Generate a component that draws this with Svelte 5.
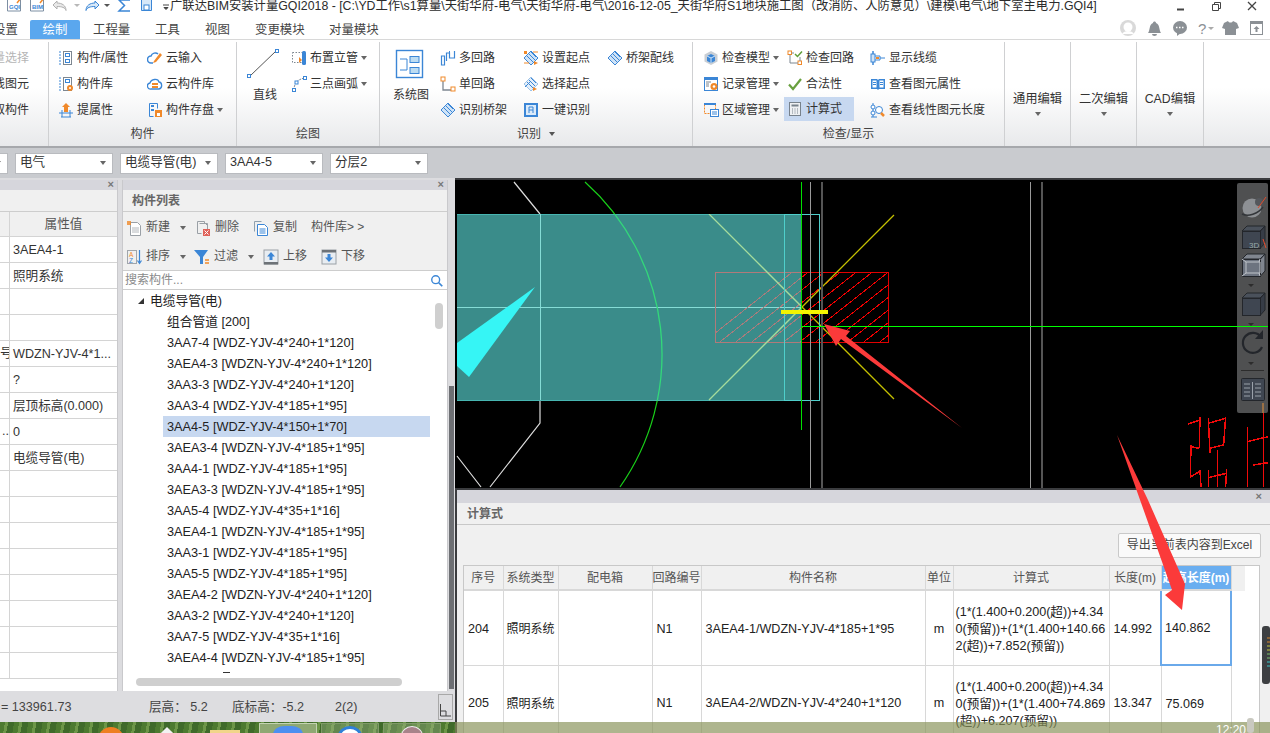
<script>
  const B = '#3b86d6', O = '#f0892a', G = '#7d8791';

  // 16x16 icons used in ribbon and toolbars
  const stackRows = `<path d="M1 2h2M1 5h2M1 8h2M1 11h2M1 14h2" stroke="${B}"/><rect x="5.5" y="1.5" width="8" height="13" stroke="${G}"/><rect x="7.5" y="3.5" width="4" height="3" stroke="${B}"/>`;
  const hatch = `<path d="M1 8l7-7 7 7-7 7z" stroke="${B}" fill="#cfe3f7"/><path d="M4 6l6 6M6 4l6 6M8 2l5 5" stroke="${B}"/>`;
  const icons = {
    attr: `${stackRows}<rect x="7.5" y="9.5" width="4" height="3" stroke="${B}"/>`,
    lib: `${stackRows}<circle cx="12" cy="12" r="3" fill="${O}"/><circle cx="12" cy="12" r="1" fill="#fff"/>`,
    pick: `<path d="M8 1l4 4h-2v5H6V5H4z" fill="${O}"/><path d="M1 11h14M3 15h10M4 8v7M12 8v7" stroke="${B}"/>`,
    cloudin: `<path d="M6 13H4a3 3 0 010-7c1-3 5-4 7-2" stroke="${B}" stroke-width="1.5"/><path d="M7 11l6-8 2 2-6 7-3 1z" fill="${O}"/>`,
    cloudlib: `<path d="M4 13a3 3 0 01-1-6c1-4 8-5 9-1 3 0 4 6 0 7z" stroke="${B}" stroke-width="1.3" fill="#fff"/><rect x="5" y="7" width="6" height="2" fill="${O}"/><rect x="5" y="10" width="6" height="2" fill="${O}"/>`,
    saveas: `<path d="M2.5 1.5h8v5M2.5 1.5v13h4" stroke="${B}"/><rect x="4" y="3" width="3" height="2" fill="${B}"/><rect x="4" y="7" width="3" height="2" fill="${B}"/><rect x="8" y="8" width="7" height="7" fill="${O}"/><rect x="10" y="11" width="3" height="3" fill="#fff"/>`,
    riser: `<rect x="1.5" y="2.5" width="10" height="10" stroke="${G}" stroke-dasharray="1.5 1.5"/><rect x="11" y="1" width="4" height="14" rx="1.5" fill="${B}"/><path d="M8 7l3 3-3 3z" fill="${O}"/>`,
    arc: `<path d="M3 14C3 7 7 3 14 2" stroke="${G}" stroke-dasharray="2 1"/><rect x="1.5" y="12.5" width="3" height="3" stroke="${B}" fill="#fff"/><rect x="12.5" y=".5" width="3" height="3" stroke="${B}" fill="#fff"/><rect x="4" y="5" width="3" height="3" stroke="${B}" fill="#fff"/>`,
    multi: `<path d="M1.5 15V6h3v9zM6.5 11V3h3v5h5V1" stroke="${B}" stroke-width="1.2"/><path d="M9.5 1v2" stroke="${B}"/>`,
    single: `<path d="M3 3v11h9" stroke="${G}" stroke-width="1.3"/><rect x="1" y="1" width="4" height="4" stroke="${O}" fill="#fff"/><rect x="11" y="11" width="4" height="4" stroke="${O}" fill="#fff"/>`,
    tray: hatch,
    setstart: `${hatch}<rect x="1" y="1" width="3" height="3" fill="${O}"/><path d="M11 11l4 2-4 2z" fill="${O}"/><path d="M1 13h5M10 2h5" stroke="${O}"/>`,
    selstart: `<path d="M1 8l7-7 7 7-7 7z" stroke="#9cc2e8" fill="#e4effa"/><path d="M4 6l6 6M6 4l6 6M8 2l5 5M2 11l6-6" stroke="${B}"/><path d="M10 11l4 2-4 2z" fill="${O}"/>`,
    oneclick: `<rect x="1" y="1" width="14" height="14" fill="${B}"/><rect x="3" y="3" width="10" height="10" fill="#dcebfa"/><path d="M6 11V5h4v6M6 8h4" stroke="${B}"/>`,
    cube: `<path d="M8 1l6.5 3.5v7L8 15l-6.5-3.5v-7z" fill="#c9ced4"/><path d="M8 4l4 2v5l-4 2-4-2V6z" fill="${B}"/><path d="M8 8v5M4 6l4 2 4-2" stroke="#cfe3f7"/>`,
    record: `<rect x="1.5" y="1.5" width="13" height="13" stroke="${B}" fill="#fff"/><rect x="1" y="1" width="14" height="3" fill="${B}"/><path d="M3 6h5M3 8h3M3 10h3" stroke="${G}"/><circle cx="11" cy="10.5" r="3.5" fill="${O}"/><circle cx="11" cy="10.5" r="1.3" fill="#fff"/>`,
    region: `<rect x="1.5" y="1.5" width="11" height="10" stroke="${O}" stroke-dasharray="2 1"/><rect x="1" y="1" width="12" height="2" fill="${B}"/><rect x="7.5" y="7.5" width="8" height="7" stroke="${B}" fill="#fff"/><path d="M9 10h5M9 12h5" stroke="${B}"/>`,
    circuit: `<rect x="1" y="1" width="3.5" height="3.5" stroke="${O}" fill="#fff"/><rect x="11" y="11" width="3.5" height="3.5" stroke="${O}" fill="#fff"/><path d="M4.5 3H7M3 5v8h8M13 7v4" stroke="${G}"/><path d="M8 4l2.5 2.5L15 1.5" stroke="#5f9e3a" stroke-width="1.5"/>`,
    check: `<path d="M2 8.5l4 4.5 8-10" stroke="#69a03f" stroke-width="2.2"/>`,
    calc: `<rect x="2.5" y="1.5" width="11" height="13" fill="#eef0f3" stroke="#78828c"/><rect x="4.5" y="3.5" width="7" height="2" fill="#78828c"/><path d="M5 8h1M7.5 8h1M10 8h1M5 10h1M7.5 10h1M10 10h1M5 12h1M7.5 12h1M10 12h1" stroke="#78828c"/>`,
    cable: `<path d="M3 1v14" stroke="${B}" stroke-width="1.5"/><rect x="1" y="4" width="4" height="8" fill="#cfe3f7" stroke="${B}"/><path d="M5 6h5v4H5M10 8h5" stroke="${B}"/><rect x="6" y="7" width="3" height="2" fill="${O}"/>`,
    book: `<path d="M1 3h6l1 1 1-1h6v10H9l-1 1-1-1H1z" fill="${B}"/><path d="M2.5 4.5h4v7h-4zM9.5 4.5h4v7h-4z" fill="#fff"/><path d="M3 6.5h3M3 8.5h3M10 6.5h3M10 8.5h3" stroke="${B}"/>`,
    measure: `<path d="M3 1v14M1 15h6" stroke="${B}"/><circle cx="3" cy="5" r="2" fill="#fff" stroke="${B}"/><circle cx="3" cy="11" r="2" fill="#fff" stroke="${B}"/><circle cx="9" cy="8" r="3.5" fill="#fff" stroke="${B}"/><path d="M11 11l3 3" stroke="${O}" stroke-width="2.5"/>`,
    newdoc: `<path d="M4.5 2.5h7l3 3v10h-10z" fill="#fff" stroke="#9aa0a6"/><path d="M6 8h7M6 10h7M6 12h7" stroke="#b4b8bc"/><rect x="1" y="1" width="4" height="4" fill="${O}" opacity=".8"/>`,
    del: `<path d="M2.5 1.5h7v2h3v4M2.5 1.5v12h4" stroke="#9aa0a6"/><path d="M4.5 3.5h6l2 2v4" stroke="#9aa0a6"/><rect x="8" y="9" width="7" height="7" fill="#e0625a"/><path d="M9.5 10.5l4 4m0-4l-4 4" stroke="#fff"/>`,
    copy: `<path d="M1.5 11.5v-10h7" stroke="#8fa0ae"/><path d="M4.5 4.5h7l3 3v8h-10z" fill="#fff" stroke="${B}"/><path d="M6.5 9h6M6.5 11h6M6.5 13h6" stroke="${B}"/>`,
    sort: `<rect x="1.5" y="1.5" width="9" height="13" stroke="#a0a6ac"/><text x="3" y="7.5" font-size="6.5" font-family="Liberation Sans" fill="${O}">A</text><text x="3" y="13.5" font-size="6.5" font-family="Liberation Sans" fill="${B}">Z</text><path d="M13.5 1v13M11.5 11.5l2 3 2-3" stroke="${B}" stroke-width="1.2"/>`,
    filter: `<path d="M0 1h14L9 8v7H6V8z" fill="${B}"/><path d="M11 11h4M11 14h4" stroke="${O}" stroke-width="1.5"/>`,
    up: `<rect x="1" y="1" width="14" height="14" fill="#e8edf2" stroke="#9aa0a6"/><rect x="1" y="13" width="14" height="2.5" fill="#6d7277"/><path d="M8 3l4 4.5H9.5V11h-3V7.5H4z" fill="${B}"/>`,
    down: `<rect x="1" y="1" width="14" height="14" fill="#e8edf2" stroke="#9aa0a6"/><rect x="1" y="1" width="14" height="2.5" fill="#6d7277"/><path d="M8 13l4-4.5H9.5V5h-3v3.5H4z" fill="${B}"/>`,
    search: `<circle cx="6.5" cy="6.5" r="4.5" stroke="${B}" stroke-width="1.6"/><path d="M10 10l4 4" stroke="${B}" stroke-width="2"/>`
  };

  const ribbon = [
    { label: '', w: 49, clip: true, cols: [{ items: [{ t: '批量选择', off: true }, { t: '选线图元' }, { t: '拾取构件' }] }] },
    { label: '构件', w: 188, pad: 9, cols: [
      { w: 89, items: [{ i: 'attr', t: '构件/属性' }, { i: 'lib', t: '构件库' }, { i: 'pick', t: '提属性' }] },
      { items: [{ i: 'cloudin', t: '云输入' }, { i: 'cloudlib', t: '云构件库' }, { i: 'saveas', t: '构件存盘', c: true }] }
    ] },
    { label: '绘图', w: 143, pad: 8, big: { name: '直线', w: 46, kind: 'line' }, cols: [
      { items: [{ i: 'riser', t: '布置立管', c: true }, { i: 'arc', t: '三点画弧', c: true }] }
    ] },
    { label: '识别', labelCaret: true, w: 313, pad: 11, big: { name: '系统图', w: 49, kind: 'sys' }, cols: [
      { w: 83, items: [{ i: 'multi', t: '多回路' }, { i: 'single', t: '单回路' }, { i: 'tray', t: '识别桥架' }] },
      { w: 84, items: [{ i: 'setstart', t: '设置起点' }, { i: 'selstart', t: '选择起点' }, { i: 'oneclick', t: '一键识别' }] },
      { items: [{ i: 'tray', t: '桥架配线' }] }
    ] },
    { label: '检查/显示', w: 312, pad: 10, cols: [
      { w: 84, items: [{ i: 'cube', t: '检查模型', c: true }, { i: 'record', t: '记录管理', c: true }, { i: 'region', t: '区域管理', c: true }] },
      { w: 83, items: [{ i: 'circuit', t: '检查回路' }, { i: 'check', t: '合法性' }, { i: 'calc', t: '计算式', on: true }] },
      { items: [{ i: 'cable', t: '显示线缆' }, { i: 'book', t: '查看图元属性' }, { i: 'measure', t: '查看线性图元长度' }] }
    ] }
  ];
  const tabs = [
    { t: '设置', w: 37 },
    { t: '绘制', w: 50, on: true },
    { t: '工程量', w: 62 },
    { t: '工具', w: 50 },
    { t: '视图', w: 50 },
    { t: '变更模块', w: 74 },
    { t: '对量模块', w: 74 }
  ];
  const props = ['3AEA4-1', '照明系统', '', '', 'WDZN-YJV-4*1...', '?', '层顶标高(0.000)', '0', '电缆导管(电)', '', '', '', '', '', '', '', ''];
  const propKeys = { 4: '号', 7: '..' };
  const tools = [
    [{ i: 'newdoc', t: '新建', w: 69, c: true }, { i: 'del', t: '删除', w: 58 }, { i: 'copy', t: '复制', w: 58 }, { t: '构件库> >', w: 70 }],
    [{ i: 'sort', t: '排序', w: 68, c: true }, { i: 'filter', t: '过滤', w: 69, c: true }, { i: 'up', t: '上移', w: 58 }, { i: 'down', t: '下移', w: 60 }]
  ];
  const tree = ['组合管道 [200]', '3AA7-4 [WDZ-YJV-4*240+1*120]', '3AEA4-3 [WDZN-YJV-4*240+1*120]', '3AA3-3 [WDZ-YJV-4*240+1*120]', '3AA3-4 [WDZ-YJV-4*185+1*95]', '3AA4-5 [WDZ-YJV-4*150+1*70]', '3AEA3-4 [WDZN-YJV-4*185+1*95]', '3AA4-1 [WDZ-YJV-4*185+1*95]', '3AEA3-3 [WDZN-YJV-4*185+1*95]', '3AA5-4 [WDZ-YJV-4*35+1*16]', '3AEA4-1 [WDZN-YJV-4*185+1*95]', '3AA3-1 [WDZ-YJV-4*185+1*95]', '3AA5-5 [WDZ-YJV-4*185+1*95]', '3AEA4-2 [WDZN-YJV-4*240+1*120]', '3AA3-2 [WDZ-YJV-4*240+1*120]', '3AA7-5 [WDZ-YJV-4*35+1*16]', '3AEA4-4 [WDZN-YJV-4*185+1*95]'];
  const heads = ['序号', '系统类型', '配电箱', '回路编号', '构件名称', '单位', '计算式', '长度(m)', '超高长度(m)', ''];
  const widths = [39, 55, 94, 49, 224, 28, 156, 52, 70, 14];
  const rows = [
    { no: 204, name: '3AEA4-1/WDZN-YJV-4*185+1*95', f: ['(1*(1.400+0.200(超))+4.34', '0(预留))+(1*(1.400+140.66', '2(超))+7.852(预留))'], len: '14.992', high: '140.862', sel: true },
    { no: 205, name: '3AEA4-2/WDZN-YJV-4*240+1*120', f: ['(1*(1.400+0.200(超))+4.34', '0(预留))+(1*(1.400+74.869', '(超))+6.207(预留))'], len: '13.347', high: '75.069' }
  ];
  const hatchLines = Array.from({ length: 16 }, (_, n) => 700 + n * 16);
  const cubes = [43, 71, 110];
</script>

<div class="app">
  <header class="titlebar">
    <svg class="qa" width="170" height="20" viewBox="0 0 170 20" fill="none">
      <path d="M7.5 -1h13v12h-13zM30.5 -1h13v12h-13z" fill="#fff" stroke="#7d8fa3"/>
      <path d="M17 3l4-5M40 3l4-5" stroke={O} stroke-width="1.5"/>
      <text x="9" y="9" font-size="6" font-family="Liberation Sans" font-weight="700" fill={B}>GQI</text>
      <text x="32" y="9" font-size="6" font-family="Liberation Sans" font-weight="700" fill={B}>BIM</text>
      <path d="M57 1l-4 4 4 4V6.5c5 0 8 1 9 4 0-5-4-7.5-9-7.5z" fill="#e8e8e8" stroke="#b0b0b0"/>
      <path d="M74 4h6l-3 3z" fill="#b8b8b8"/>
      <path d="M95 1l4 4-4 4V6.5c-5 0-8 1-9 4 0-5 4-7.5 9-7.5z" fill="#d7e8f8" stroke={B}/>
      <path d="M104 4h6l-3 3z" fill="#555"/>
      <path d="M130 0h-11l5.5 5.5L119 11h11" stroke={B} stroke-width="1.5"/>
      <path d="M141.5 -1h10v11.5h-10z" fill="#d7e8f8" stroke={B}/>
      <rect x="144" y="5" width="5" height="5" fill="#fff" stroke={B}/>
      <path d="M163 5h6M164 7.5h4l-2 2z" fill="#444" stroke="#444"/>
    </svg>
    <span class="apptitle">广联达BIM安装计量GQI2018 - [C:\YD工作\s1算量\天街华府-电气\天街华府-电气\2016-12-05_天街华府S1地块施工图（改消防、人防意见）\建模\电气\地下室主电力.GQI4]</span>
    <svg class="winbtns" width="90" height="14" viewBox="0 0 90 14" fill="none" stroke="#444">
      <path d="M0 9.5h7" stroke-width="2"/>
      <path d="M35.5 4.5h6v6h-6zM37.5 4.5v-2h6v6h-2"/>
      <path d="M71 2l8 8m0-8l-8 8" stroke-width="1.3"/>
    </svg>
  </header>

  <nav class="tabbar">
    {#each tabs as tab}
      <span class="tab" class:on={tab.on} style="width:{tab.w}px">{tab.t}</span>
    {/each}
    <svg class="usericons" width="150" height="20" viewBox="0 0 150 20">
      <g transform="translate(2 -2)"><circle cx="9" cy="10" r="8" fill="#d9d9d9"/><circle cx="9" cy="9" r="4.5" fill="#fff"/><path d="M3 16c2-4 10-4 12 0z" fill="#fff"/></g>
      <path transform="translate(-5 -2)" d="M36 15c2-2 1-9 5-10 0-2 3-2 3 0 4 1 3 8 5 10zM40 16h5a2.5 2 0 01-5 0z" fill="#8b9095"/>
      <g transform="translate(-4 -2)"><ellipse cx="67" cy="9.5" rx="7" ry="6.5" fill="#8b9095"/><path d="M64 14v4l4-3z" fill="#8b9095"/><path d="M63 9.5h1.5M66 9.5h1.5M69 9.5h1.5" stroke="#fff" stroke-width="1.5"/></g>
      <g transform="translate(-6 -2)"><text x="87" y="16" font-size="15" font-family="Liberation Sans" fill="#8b9095">?</text><path d="M97 9h6l-3 3z" fill="#aaa"/></g>
      <path transform="translate(-6 -2)" d="M113 5l4-2c1 2 4 2 5 0l4 2 2 5-3 1v6h-11v-6l-3-1z" fill="#8b9095"/>
      <g transform="translate(-5 -2)"><rect x="138.5" y="3.5" width="12" height="13" fill="none" stroke="#8b9095"/><path d="M138 3h13v3h-13z" fill="#8b9095"/><path d="M144.5 8l3 3h-2v3h-2v-3h-2z" fill="#8b9095"/></g>
    </svg>
  </nav>

  <section class="ribbon">
    {#each ribbon as g}
      <div class="group" style="width:{g.w}px">
        <div class="gbody" class:gclip={g.clip} style="padding-left:{g.pad ?? 0}px">
          {#if g.big}
            <div class="bigbtn" style="width:{g.big.w}px">
              {#if g.big.kind === 'line'}
                <svg width="40" height="32" viewBox="0 0 40 32" fill="none">
                  <path d="M5 28L31 3" stroke="#555"/>
                  <rect x="2.5" y="26.5" width="3" height="3" fill="#fff" stroke={B}/>
                  <rect x="30.5" y="1.5" width="3" height="3" fill="#fff" stroke={B}/>
                </svg>
              {:else}
                <svg width="40" height="32" viewBox="0 0 40 32" fill="none">
                  <rect x="5.5" y="2.5" width="26" height="27" fill="#fff" stroke={B} stroke-width="1.4"/>
                  <path d="M9 11h7M9 22h7M16 11v11" stroke={B}/>
                  <rect x="19" y="8.5" width="9" height="6" fill="#bcdcf2" stroke={B}/>
                  <rect x="19" y="19.5" width="9" height="6" fill="#bcdcf2" stroke={B}/>
                </svg>
              {/if}
              <span>{g.big.name}</span>
            </div>
          {/if}
          {#each g.cols as col}
            <div class="col" style={col.w ? `width:${col.w}px` : ''}>
              {#each col.items as it}
                <div class="ritem" class:on={it.on} class:off={it.off}>
                  {#if it.i}
                    <svg class="ico" width="16" height="16" viewBox="0 0 16 16" fill="none">{@html icons[it.i]}</svg>
                  {/if}
                  <span>{it.t}</span>
                  {#if it.c}<i class="caret"></i>{/if}
                </div>
              {/each}
            </div>
          {/each}
        </div>
        <div class="glabel">{g.label}{#if g.labelCaret}<i class="caret lc"></i>{/if}</div>
      </div>
    {/each}
    {#each ['通用编辑', '二次编辑', 'CAD编辑'] as name}
      <div class="group drop"><span>{name}</span><i class="caret"></i></div>
    {/each}
  </section>

  <div class="combobar">
    {#each ['', '电气', '电缆导管(电)', '3AA4-5', '分层2'] as c, n}
      <div class="combo" class:first={n === 0}><span>{c}</span><i class="caret"></i></div>
    {/each}
  </div>

  <main class="body">
    <div class="leftcol">
      <div class="panels">
        <div class="panel props">
          <div class="strip"><b>×</b></div>
          <div class="phead"></div>
          <div class="proprow head"><span class="k"></span><span class="v c">属性值</span></div>
          {#each props as p, n}
            <div class="proprow"><span class="k">{propKeys[n] ?? ''}</span><span class="v">{p}</span></div>
          {/each}
        </div>
        <div class="panel list">
          <div class="strip"><b>×</b></div>
          <div class="phead title">构件列表</div>
          <div class="tools">
            {#each tools as row}
              <div class="toolrow">
                {#each row as tl}
                  <div class="tool" style="width:{tl.w}px">
                    {#if tl.i}
                      <svg class="ico" width="16" height="16" viewBox="0 0 16 16" fill="none">{@html icons[tl.i]}</svg>
                    {/if}
                    <span>{tl.t}</span>
                    {#if tl.c}<i class="caret"></i>{/if}
                  </div>
                {/each}
              </div>
            {/each}
          </div>
          <div class="search">
            <span>搜索构件...</span>
            <svg width="14" height="14" viewBox="0 0 16 16" fill="none">{@html icons.search}</svg>
          </div>
          <div class="tree">
            <div class="node root"><i class="tri"></i>电缆导管(电)</div>
            {#each tree as t, n}
              <div class="node" class:sel={n === 5}>{t}</div>
            {/each}
            <i class="cutmark"></i>
            <i class="vthumb"></i>
            <i class="hthumb"></i>
          </div>
        </div>
        <div class="splitter"><i></i></div>
      </div>
      <footer class="status">
        <span class="s1">= 133961.73</span>
        <span class="s2">层高： 5.2</span>
        <span class="s3">底标高：-5.2</span>
        <span class="s4">2(2)</span>
        <span class="cornerbtn">
          <svg width="12" height="16" viewBox="0 0 12 16" fill="none" stroke="#444"><path d="M1.5 1v12H12M1.5 8H7v5"/></svg>
        </span>
      </footer>
      <div class="task">
        <i class="t-orange"></i><i class="t-white"></i><i class="t-folder"></i>
        <span class="tbtn active"><i class="dot blue"></i></span>
        <span class="tbtn"><i class="dot ie"></i></span>
        <span class="tbtn"><i class="dot face"></i></span>
      </div>
    </div>

    <div class="rightcol">
      <div class="canvas">
        <svg width="815" height="308" viewBox="455 180 815 308" fill="none" shape-rendering="crispEdges">
          <rect x="455" y="180" width="815" height="308" fill="#000"/>
          <path d="M514 182L540 214M540 400V423L490 487M457 456L481 487" stroke="#ddd" stroke-width="1.2" shape-rendering="auto"/>
          <path d="M585 182A231 231 0 0 1 620 487" stroke="#19d019" stroke-width="1.2" shape-rendering="auto"/>
          <rect x="457" y="214" width="345" height="187" fill="#3a8c8a"/>
          <path d="M457 214.5H802M457 400.5H802" stroke="#47b5b1"/>
          <path d="M540.5 214V400M457 307.5H802" stroke="#86dcd6"/>
          <polygon points="535,287 457,343 457,366 469,377" fill="#36f5f5" shape-rendering="auto"/>
          <defs>
            <clipPath id="hatchbox"><rect x="715" y="272" width="174" height="71"/></clipPath>
            <clipPath id="teal"><rect x="457" y="214" width="345" height="187"/></clipPath>
            <clipPath id="dark"><rect x="802" y="180" width="468" height="308"/></clipPath>
          </defs>
          <g clip-path="url(#dark)">
            <rect x="715.5" y="272.5" width="173" height="70" stroke="#e00000"/>
            <g clip-path="url(#hatchbox)">
              {#each hatchLines as x}<path d="M{x} 345L{x + 95} 270" stroke="#f00000"/>{/each}
            </g>
            <path d="M709 214L894 399M709 400L894 215" stroke="#c4c000" stroke-width="1.3" shape-rendering="auto"/>
          </g>
          <g clip-path="url(#teal)">
            <path d="M585 182A231 231 0 0 1 620 487" stroke="#33d87a" stroke-width="1.3" shape-rendering="auto"/>
            <rect x="715.5" y="272.5" width="173" height="70" stroke="#b07a7a"/>
            <g clip-path="url(#hatchbox)">
              {#each hatchLines as x}<path d="M{x} 345L{x + 95} 270" stroke="#a87c7c"/>{/each}
            </g>
            <path d="M709 214L894 399M709 400L894 215" stroke="#a5dc9c" stroke-width="1.3" shape-rendering="auto"/>
          </g>
          <path d="M784.5 214.5H819.5V400.5H784.5Z" stroke="#4fcfcb"/>
          <path d="M801.5 182V430" stroke="#00e000"/>
          <path d="M810.5 182V488" stroke="#9a9a9a"/>
          <path d="M822 182V488M1042 182V488" stroke="#555" stroke-width="2"/>
          <path d="M1030.5 182V488" stroke="#9a9a9a"/>
          <rect x="781" y="310" width="47" height="4" fill="#f4f400"/>
          <g transform="translate(955 180) scale(.3333)" stroke="#f00a0a" stroke-width="4.5">
            <path d="M700 732L735 720M735 712L733 805M708 795L706 895M708 800L733 805"/>
            <path d="M760 715L765 820M760 730L812 715M812 712L806 795M765 805L806 795"/>
            <path d="M788 810V920M760 870V920M815 868L812 920M760 893L815 880"/>
            <path d="M735 870L738 920M708 890L738 872"/>
            <path d="M877 742V920M877 785L940 770M925 670V920M895 855L940 848"/>
          </g>
        </svg>
        <aside class="viewtools">
          <svg width="31" height="230" viewBox="0 0 31 230" fill="none">
            <circle cx="15" cy="25" r="9.5" fill="#8d9094"/><circle cx="22" cy="19" r="4" fill="#54575c"/>
            <path d="M5 31c6 3 16 0 21-7" stroke="#33363a" stroke-width="1.5"/>
            {#each cubes as y, n}
              <path d="M5 {y + 5}L10 {y}H28L23 {y + 5}Z" fill={n === 1 ? '#80868f' : '#4a515b'} stroke="#23262b"/>
              <rect x="5.5" y={y + 5.5} width="18" height="17" fill={n === 1 ? '#6d7480' : '#3f4651'} stroke="#23262b"/>
              <path d="M23.5 {y + 5}L28 {y}V{y + 17}L23.5 {y + 22}Z" fill={n === 1 ? '#80868f' : '#363c46'} stroke="#23262b"/>
            {/each}
            <path d="M9 79h14v11H9zM5 76l4 3M23 76l-1 3M5 93l4-3M23 93l-1-3" stroke="#c0c4ca"/>
            <text x="12" y="65" font-size="8" font-family="Liberation Sans" fill="#9aa">3D</text>
            <path d="M11 101h6l-3 3zM11 140h6l-3 3zM11 179h6l-3 3z" fill="#2c2c2c"/>
            <path d="M24 154a10 10 0 1 0 1 10" stroke="#23262b" stroke-width="2.2"/><path d="M26 147v9h-8z" fill="#23262b"/>
            <path d="M4 187.5h23" stroke="#2c2c2c"/>
            <rect x="4.5" y="195.5" width="23" height="22" rx="1" fill="#3f4651" stroke="#23262b"/>
            <path d="M7 201h6M7 205h6M7 209h6M7 213h6M18 201h6M18 205h6M18 209h6M18 213h6M15.5 199v17" stroke="#9aa1aa"/>
          </svg>
        </aside>
      </div>

      <div class="calc">
        <div class="strip"><b>×</b></div>
        <div class="calctitle">计算式</div>
        <div class="calcbar"><button class="export">导出当前表内容到Excel</button></div>
        <div class="tablewrap">
          <table>
            <colgroup>{#each widths as w}<col style="width:{w}px" />{/each}</colgroup>
            <thead>
              <tr>
                {#each heads as h, n}
                  <th class:hot={n === 8} class:blank={n === 9}>{h}</th>
                {/each}
              </tr>
            </thead>
            <tbody>
              {#each rows as r}
                <tr>
                  <td>{r.no}</td><td class="cjk">照明系统</td><td></td><td>N1</td>
                  <td>{r.name}</td><td class="mid">m</td>
                  <td class="formula">{#each r.f as line}<div>{line}</div>{/each}</td>
                  <td>{r.len}</td>
                  <td class:picked={r.sel}>{r.high}</td>
                  <td class="blank"></td>
                </tr>
              {/each}
            </tbody>
          </table>
        </div>
      </div>
      <div class="trayglass"><span>12:20</span></div>
    </div>

    <svg class="marks" width="1270" height="733" viewBox="0 0 1270 733" fill="none">
      <rect x="802" y="326" width="466" height="1" fill="#00ff00"/>
      <polygon points="824,324 850,331 846,336 962,428 841,339 836,346" fill="#fb3a3a"/>
      <polygon points="1117,435 1148,500 1185,584 1182,610 1165,595 1172,590" fill="#fb3a3a"/>
      <path d="M1258 208l8-11M1266 248l-3-9" stroke="#e04a2a"/>
      <path d="M1263 403v10" stroke="#e8913a"/>
      <rect x="1262" y="626" width="8" height="58" rx="3" fill="#3d3f42"/>
      <path d="M1267 638h3M1267 642h3" stroke="#d8862a"/>
      <path d="M1267 646h3M1267 650h3" stroke="#c8c83a"/>
      <path d="M1267 654h3M1267 658h3" stroke="#7ac06a"/>
      <path d="M1267 662h3M1267 666h3" stroke="#38c8c8"/>
      <rect x="1247" y="718" width="7" height="15" rx="3" fill="#c9c9c0"/>
    </svg>
  </main>
</div>

<style>
  :global(body) {
    margin: 0;
  }

  .app {
    position: relative;
    width: 1270px;
    height: 733px;
    overflow: hidden;
    display: flex;
    flex-direction: column;
    background: #fff;
    color: #333;
    font: 12px/1.2 "Liberation Sans", "Noto Sans CJK SC", sans-serif;
  }

  i {
    display: block;
  }

  .caret {
    width: 0;
    height: 0;
    border: 3px solid transparent;
    border-top: 4px solid #666;
    border-bottom: 0;
  }

  /* title + tabs */
  .titlebar {
    height: 20px;
    display: flex;
    align-items: flex-start;
    flex: none;
  }

  .qa {
    flex: none;
  }

  .apptitle {
    font-size: 12.34px;
    line-height: 13px;
    white-space: nowrap;
    width: 927px;
    flex: none;
    color: #2c2c2c;
  }

  .winbtns {
    margin-left: 80px;
    flex: none;
  }

  .tabbar {
    height: 20px;
    box-sizing: border-box;
    display: flex;
    flex: none;
    align-items: stretch;
    border-bottom: 1px solid #d8d8d8;
    font-size: 12.4px;
    position: relative;
  }

  .tab {
    flex: none;
    box-sizing: border-box;
    padding-left: 13px;
    line-height: 21px;
    white-space: nowrap;
    color: #444;
  }

  .tab:first-child {
    margin-left: -7px;
    padding-left: 0;
  }

  .tab.on {
    background: #5aa7ee;
    color: #fff;
    border-radius: 2px 2px 0 0;
    padding-left: 0;
    text-align: center;
  }

  .usericons {
    position: absolute;
    right: 3px;
    top: 0;
  }

  /* ribbon */
  .ribbon {
    height: 108px;
    display: flex;
    flex: none;
    box-sizing: border-box;
    background: linear-gradient(#fff 45%, #e8e9eb);
    border-bottom: 2px solid #a6a8ac;
  }

  .group {
    flex: none;
    height: 104px;
    box-sizing: border-box;
    margin-top: 2px;
    border-right: 1px solid #cfd0d2;
    display: flex;
    flex-direction: column;
  }

  .gbody {
    height: 78px;
    margin-top: 3px;
    display: flex;
    box-sizing: border-box;
  }

  .gclip {
    justify-content: flex-end;
    overflow: hidden;
    padding-right: 19px;
  }

  .gclip .col {
    align-items: flex-end;
    display: flex;
    flex-direction: column;
  }

  .glabel {
    height: 22px;
    display: flex;
    align-items: center;
    justify-content: center;
    gap: 8px;
    color: #444;
  }

  .lc {
    border-top-color: #555;
  }

  .col {
    flex: none;
  }

  .ritem {
    height: 26px;
    display: flex;
    align-items: center;
    white-space: nowrap;
  }

  .ritem .ico {
    margin-right: 3px;
    flex: none;
  }

  .ritem .caret {
    margin-left: 3px;
  }

  .ritem.off {
    color: #b5b5b5;
  }

  .ritem.on {
    background: #c7d8f0;
    height: 24px;
    width: 70px;
    margin: 0 0 0 -3px;
    padding-left: 3px;
    box-sizing: border-box;
  }

  .bigbtn {
    flex: none;
    display: flex;
    flex-direction: column;
    align-items: flex-start;
    padding-top: 3px;
    box-sizing: border-box;
  }

  .bigbtn span {
    width: 40px;
    text-align: center;
    margin-top: 8px;
  }

  .drop {
    width: 66px;
    align-items: center;
    justify-content: flex-start;
    padding-top: 50px;
    gap: 5px;
    font-size: 12.3px;
  }

  .drop:last-child {
    width: 67px;
  }

  /* combos */
  .combobar {
    height: 30px;
    flex: none;
    background: #c9cbcf;
    display: flex;
    gap: 7px;
    align-items: center;
    box-sizing: border-box;
  }

  .combo {
    width: 98px;
    height: 21px;
    flex: none;
    box-sizing: border-box;
    background: #fff;
    border: 1px solid #b9bbbf;
    display: flex;
    align-items: center;
    justify-content: space-between;
    padding: 0 6px 0 4px;
    font-size: 12.6px;
    white-space: nowrap;
  }

  .combo.first {
    margin-left: -90px;
  }

  /* main body */
  .body {
    flex: 1;
    display: flex;
    min-height: 0;
    position: relative;
  }

  .leftcol {
    width: 455px;
    flex: none;
    display: flex;
    flex-direction: column;
    background: #dcdcdf;
  }

  .panels {
    height: 513px;
    display: flex;
    padding-top: 2px;
    flex: none;
    box-sizing: border-box;
    position: relative;
    align-items: stretch;
  }

  .panel {
    background: #fff;
    display: flex;
    flex-direction: column;
    overflow: hidden;
    box-sizing: border-box;
    border-right: 1px solid #c9c9cc;
    height: 511px;
  }

  .strip {
    height: 10px;
    flex: none;
    background: #d6d6dc;
    text-align: right;
    color: #777;
  }

  .strip b {
    display: block;
    font: 700 11px/9px "Liberation Sans", sans-serif;
    margin-right: 3px;
  }

  .phead {
    height: 22px;
    flex: none;
    background: #f0f0f0;
    border-bottom: 1px solid #cdcdcd;
    box-sizing: border-box;
  }

  .phead.title {
    color: #666;
    font-weight: 700;
    padding: 4px 0 0 9px;
  }

  .props {
    width: 118px;
    flex: none;
  }

  .proprow {
    height: 26px;
    flex: none;
    display: flex;
    box-sizing: border-box;
    border-bottom: 1px solid #d4d4d4;
    align-items: center;
    font-size: 12.6px;
    white-space: nowrap;
  }

  .proprow.head {
    height: 25px;
    background: #f0f0f0;
  }

  .k {
    width: 10px;
    flex: none;
    height: 100%;
    line-height: 25px;
    border-right: 1px solid #d4d4d4;
    text-align: right;
    overflow: hidden;
    box-sizing: border-box;
  }

  .v {
    padding: 2px 0 0 3px;
  }

  .v.c {
    flex: 1;
    text-align: center;
    padding: 2px 0 0;
    color: #555;
  }

  .list {
    width: 326px;
    flex: none;
    margin-left: 4px;
    border-left: 1px solid #c9c9cc;
  }

  .tools {
    flex: none;
    height: 59px;
    background: #f0f0f0;
    border-bottom: 1px solid #cdcdcd;
    box-sizing: border-box;
  }

  .toolrow {
    height: 29px;
    box-sizing: border-box;
    display: flex;
    padding: 2px 0 0 3px;
    align-items: center;
  }

  .tool {
    flex: none;
    display: flex;
    align-items: center;
    gap: 4px;
    color: #555;
    white-space: nowrap;
  }

  .tool .caret {
    margin-left: 6px;
  }

  .search {
    height: 19px;
    flex: none;
    display: flex;
    justify-content: space-between;
    align-items: center;
    padding: 1px 3px 0 2px;
    color: #8a8a8a;
    border-bottom: 1px solid #cdcdcd;
    box-sizing: border-box;
    background: #fff;
  }

  .tree {
    position: relative;
    flex: 1;
    overflow: hidden;
  }

  .node {
    height: 21px;
    line-height: 21px;
    margin-left: 40px;
    width: 267px;
    box-sizing: border-box;
    padding-left: 4px;
    font-size: 12.72px;
    white-space: nowrap;
    color: #222;
  }

  .node.sel {
    background: #c7d8f0;
  }

  .node.root {
    margin-left: 20px;
    padding-left: 3px;
    display: flex;
    align-items: center;
  }

  .tri {
    width: 0;
    height: 0;
    border-left: 6px solid transparent;
    border-bottom: 6px solid #333;
    margin: 0 6px 0 -8px;
  }

  .vthumb {
    position: absolute;
    left: 312px;
    top: 13px;
    width: 8px;
    height: 26px;
    border-radius: 4px;
    background: #cfcfcf;
  }

  .hthumb {
    position: absolute;
    left: 13px;
    top: 388px;
    width: 266px;
    height: 8px;
    border-radius: 4px;
    background: #cfcfcf;
  }

  .cutmark {
    position: absolute;
    left: 100px;
    top: 382px;
    width: 7px;
    height: 1px;
    background: #333;
  }

  .splitter {
    width: 6px;
    flex: none;
    position: relative;
  }

  .splitter i {
    position: absolute;
    top: 206px;
    bottom: 2px;
    left: 1px;
    right: 0;
    background: #6d6f73;
  }

  .status {
    height: 31px;
    flex: none;
    box-sizing: border-box;
    background: #dddde0;
    display: flex;
    align-items: center;
    padding-top: 2px;
    font-size: 12.6px;
    color: #444;
    white-space: nowrap;
    position: relative;
  }

  .s1 {
    margin-left: 1px;
    width: 148px;
  }

  .s2 {
    width: 83px;
  }

  .s3 {
    width: 103px;
  }

  .s4 {
    width: 103px;
  }

  .cornerbtn {
    width: 15px;
    height: 26px;
    margin-top: -1px;
    box-sizing: border-box;
    border: 1px solid #a8a8a8;
    display: flex;
    align-items: flex-end;
    overflow: hidden;
  }

  .task {
    flex: 1;
    min-height: 0;
    display: flex;
    overflow: hidden;
    background: repeating-linear-gradient(100deg, #4d7a30 0 5px, #6d9648 5px 8px, #3f6a2a 8px 14px);
    padding-top: 1px;
  }

  .t-orange {
    width: 26px;
    height: 26px;
    border-radius: 50%;
    background: #ee7f22;
    margin: 4px 0 0 98px;
    flex: none;
  }

  .t-white {
    width: 10px;
    height: 10px;
    background: #f2f2f2;
    transform: rotate(45deg);
    margin: 6px 0 0 38px;
    flex: none;
  }

  .t-folder {
    width: 30px;
    height: 12px;
    background: #f1d58a;
    margin: 7px 0 0 38px;
    flex: none;
  }

  .tbtn {
    width: 58px;
    height: 20px;
    flex: none;
    margin-left: 4px;
    box-sizing: border-box;
    border: 1px solid #7f9a68;
    background: rgba(170, 190, 150, 0.35);
    display: flex;
    justify-content: center;
  }

  .tbtn.active {
    margin-left: 19px;
    background: #8fa873;
    border-color: #c3d2b2;
  }

  .dot {
    width: 30px;
    height: 20px;
    border-radius: 50%;
    margin-top: 2px;
  }

  .dot.blue {
    background: #4d8ff0;
    border-radius: 40% 40% 0 0;
  }

  .dot.ie {
    background: #fff;
    border: 3px solid #2f80d8;
    box-sizing: border-box;
    width: 24px;
  }

  .dot.face {
    background: #a8838a;
    border: 1px solid #eee;
    box-sizing: border-box;
    width: 22px;
  }

  /* canvas and calc panel */
  .rightcol {
    flex: 1;
    position: relative;
    display: flex;
    flex-direction: column;
    background: #3b3c3f;
    min-width: 0;
  }

  .canvas {
    flex: none;
    height: 312px;
    padding-top: 2px;
    box-sizing: border-box;
    position: relative;
  }

  .canvas > svg {
    display: block;
  }

  .viewtools {
    position: absolute;
    left: 782px;
    top: 5px;
    width: 31px;
    height: 230px;
    background: #4f5051;
    border-radius: 2px;
  }

  .viewtools svg {
    display: block;
  }

  .calc {
    flex: 1;
    min-height: 0;
    margin-left: 2px;
    background: #f0f0f0;
    display: flex;
    flex-direction: column;
    overflow: hidden;
  }

  .calc .strip {
    height: 13px;
  }

  .calc .strip b {
    line-height: 13px;
    margin-right: 8px;
  }

  .calctitle {
    height: 22px;
    flex: none;
    box-sizing: border-box;
    border-bottom: 1px solid #c8c8c8;
    padding: 4px 0 0 10px;
    color: #666;
    font-weight: 700;
  }

  .calcbar {
    height: 40px;
    flex: none;
    display: flex;
    justify-content: flex-end;
    align-items: flex-start;
    padding: 8px 9px 0 0;
    box-sizing: border-box;
  }

  .export {
    width: 143px;
    height: 25px;
    padding: 0;
    background: #fafafa;
    border: 1px solid #c9c9c9;
    border-radius: 2px;
    font: inherit;
    color: #444;
    white-space: nowrap;
  }

  .tablewrap {
    flex: 1;
    margin: 0 10px 0 6px;
    background: #fff;
    border: 1px solid #c8c8c8;
    border-bottom: 0;
  }

  table {
    border-collapse: collapse;
    table-layout: fixed;
    width: 781px;
  }

  th {
    height: 24px;
    padding: 2px 0 0;
    background: #f0f0f0;
    font-weight: 400;
    color: #555;
    border-right: 1px solid #d8d8d8;
    border-bottom: 2px solid #d8d8d8;
    white-space: nowrap;
    overflow: hidden;
    box-sizing: border-box;
  }

  th.hot {
    background: #6aaef0;
    color: #fff;
    font-weight: 700;
  }

  th.blank {
    border-right: 0;
    border-bottom-color: #f0f0f0;
  }

  td {
    height: 75px;
    box-sizing: border-box;
    padding: 3px 0 0 4px;
    font-size: 12.6px;
    color: #222;
    border-right: 1px solid #d8d8d8;
    border-bottom: 1px solid #d8d8d8;
    white-space: nowrap;
    overflow: hidden;
  }

  td.cjk {
    font-size: 12px;
    padding-left: 3px;
  }

  td.mid {
    text-align: center;
    padding: 3px 0 0;
  }

  td.blank {
    border: 0;
  }

  td.formula {
    line-height: 17px;
    padding-left: 2px;
  }

  td.picked {
    border: 2px solid #6aa9ea;
    padding-left: 3px;
  }

  .trayglass {
    position: absolute;
    left: 0;
    right: 0;
    bottom: 0;
    height: 11px;
    background: rgba(136, 146, 88, 0.68);
    overflow: hidden;
    color: #fff;
    text-align: right;
  }

  .trayglass span {
    display: block;
    padding-right: 24px;
    line-height: 14px;
    margin-top: 1px;
  }

  .marks {
    position: absolute;
    left: 0;
    top: -178px;
    pointer-events: none;
  }
</style>
